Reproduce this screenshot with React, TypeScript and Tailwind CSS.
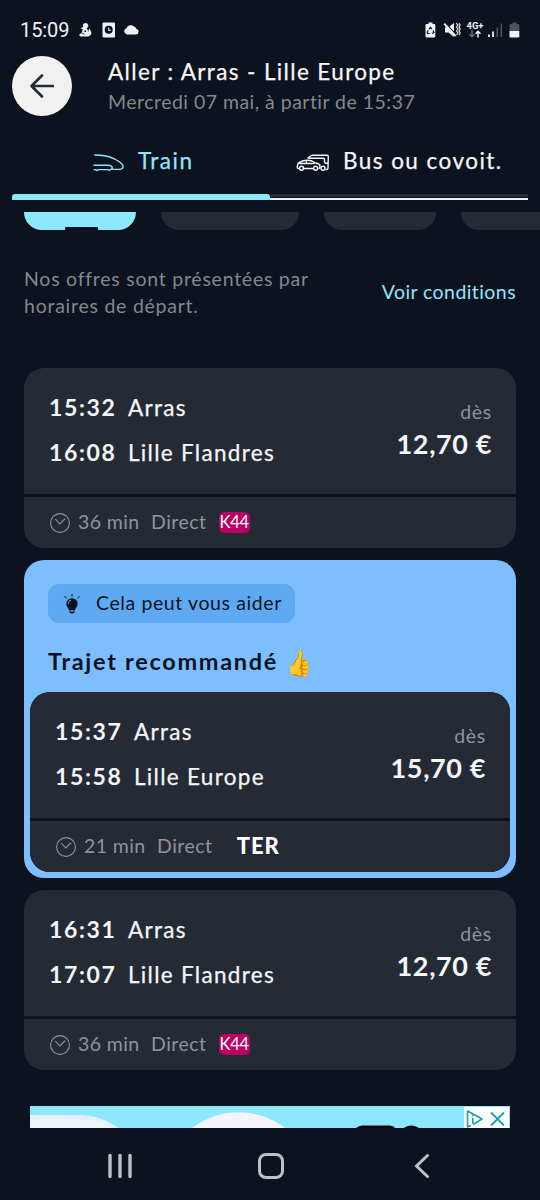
import type { ReactNode } from 'react';
import clsx from 'clsx';

interface Trip {
  departure: string;
  from: string;
  arrival: string;
  to: string;
  price: string;
  duration: string;
  line: ReactNode;
}

const LineBadge = ({ children }: { children: ReactNode }) => (
  <span className="ml-3 flex h-[21px] w-[31px] items-center justify-center rounded-[5px] bg-[#b90062] text-[16.5px] leading-none tracking-[-0.3px] text-white">
    {children}
  </span>
);

const TerLogo = () => (
  <span className="ml-6 pb-0.5 text-[22px] leading-none font-black tracking-[1px] text-white">TER</span>
);

const trips: Trip[] = [
  { departure: '15:32', from: 'Arras', arrival: '16:08', to: 'Lille Flandres', price: '12,70 €', duration: '36 min', line: <LineBadge>K44</LineBadge> },
  { departure: '15:37', from: 'Arras', arrival: '15:58', to: 'Lille Europe', price: '15,70 €', duration: '21 min', line: <TerLogo /> },
  { departure: '16:31', from: 'Arras', arrival: '17:07', to: 'Lille Flandres', price: '12,70 €', duration: '36 min', line: <LineBadge>K44</LineBadge> },
];

function ClockIcon() {
  return (
    <svg className="mt-px h-5 w-5 shrink-0" viewBox="0 0 20 20" fill="none" stroke="#8f949c" strokeWidth="1.1">
      <circle cx="10" cy="10" r="9.4" />
      <path d="M5.6 6.4 9.8 11l5-5" strokeLinecap="round" />
    </svg>
  );
}

function TripCard({ trip }: { trip: Trip }) {
  return (
    <div className="flex flex-col gap-[3px] overflow-hidden rounded-[20px] bg-[#0c121e]">
      <div className="flex h-[126px] justify-between bg-[#252b35] pr-6 pl-[25px]">
        {/* Times and stations */}
        <div className="flex flex-col pt-[17px] text-[#f5f6f8]">
          {[
            [trip.departure, trip.from],
            [trip.arrival, trip.to],
          ].map(([time, station]) => (
            <div key={time} className="flex h-[45px] leading-[45px]">
              <span className="w-[79px] text-[23px] font-bold tracking-[1.65px]">{time}</span>
              <span className="text-[22.5px] tracking-[1.3px] whitespace-nowrap [-webkit-text-stroke:0.25px]">{station}</span>
            </div>
          ))}
        </div>

        {/* Price */}
        <div className="flex flex-col items-end pt-8">
          <span className="text-[19.5px] leading-6 tracking-[0.7px] text-[#8f949c]">dès</span>
          <span className="text-[27px] leading-10 font-bold tracking-[0.6px] text-[#f5f6f8]">{trip.price}</span>
        </div>
      </div>

      {/* Duration, changes, line */}
      <div className="flex h-[51px] items-center bg-[#252b35] pl-[26px] text-[19.5px] leading-none text-[#8f949c]">
        <ClockIcon />
        <span className="ml-2 w-[73px] pb-0.5 tracking-[0.4px]">{trip.duration}</span>
        <span className="pb-0.5 tracking-[0.5px]">Direct</span>
        {trip.line}
      </div>
    </div>
  );
}

function StatusBar() {
  return (
    <div className="flex h-14 items-center justify-between pt-1 pr-5 pl-5">
      <div className="flex items-center">
        <span className="w-[58px] font-['Roboto'] text-[20px] leading-none tracking-[-0.1px] text-[#f0f1f3]">15:09</span>
        <svg className="h-4 w-[62px]" viewBox="0 0 62 16" fill="#f0f1f3">
          {/* Squirrel */}
          <circle cx="7.6" cy="3.6" r="2.7" />
          <path d="M5.5 4.5 2.6 6.4l2.2.7-1 3.5L1 13l1.5 1.4h8c2.5-.8 3.4-3 2.7-4.6-.6-1.2-1.4-1.8-1-3.2-1.7.6-2 2.4-1.6 3.6L9 6.5Z" />
          <circle cx="7.3" cy="9.2" r=".9" fill="#0c121e" />
          <path d="m3.5 10.8 3 1.4" stroke="#0c121e" strokeWidth=".8" />
          {/* Clock tile */}
          <rect x="24.5" y=".5" width="12.5" height="15" rx="1" />
          <circle cx="30.7" cy="7.8" r="4" fill="#0c121e" />
          <path d="M30.7 5.4v2.8h2.3" fill="none" stroke="#f0f1f3" strokeWidth="1.1" />
          <path d="M49 12.500a3.400 3.400 0 0 1-.4-6.600A4.500 4.500 0 0 1 56 4.600a3.500 3.500 0 0 1 2.300 2.200 2.900 2.900 0 0 1-.3 5.700Z" />
        </svg>
      </div>
      <div className="flex items-center">
        <svg className="h-4 w-9" viewBox="0 0 36 16" fill="#f0f1f3">
          <path d="M3.5.5h4V2H9a1.3 1.3 0 0 1 1.3 1.3v10.9A1.3 1.3 0 0 1 9 15.5H1.8a1.3 1.3 0 0 1-1.3-1.3V3.3A1.3 1.3 0 0 1 1.8 2h1.700Z" />
          <path d="m4 7.3 1.4-2.1 1.4 2M8 8.4l1 2-2 1.2M4.8 11.5H2.6l-.4-1.2 1-2" fill="none" stroke="#0c121e" strokeWidth="1.2" />
          <path d="M20 5.2h3.5L29 1v14l-5.5-4.4H20Z" />
          <path d="m20.500 1.200 11 12.100" stroke="#0c121e" strokeWidth="1.300" />
          <path d="m19.2 1.6 11.500 12.600" stroke="#f0f1f3" strokeWidth="1.900" />
          <path d="M31.200 1.200 33 3l-1.500 2L33 7l-1.500 2 1.500 2-1.500 2M34 1.200 35.200 3 34 5l1.200 2L34 9l1.200 2L34 13" fill="none" stroke="#f0f1f3" strokeWidth="1.100" />
        </svg>
        <div className="ml-[5px] flex w-[18px] flex-col items-center">
          <span className="font-['Roboto'] text-[9.5px] leading-[8px] font-bold text-[#f0f1f3]">4G+</span>
          <svg className="h-2 w-3.5" viewBox="0 0 14 8" fill="none" strokeWidth="1.5">
            <path d="M4 .5v6M1.5 4.3 4 6.8l2.5-2.5" stroke="#6b7079" />
            <path d="M10 7.5v-6M7.5 3.7 10 1.200l2.5 2.5" stroke="#f0f1f3" />
          </svg>
        </div>
        <svg className="ml-1 h-4 w-8" viewBox="0 0 32 16">
          <path d="M1 12.500v2.500M5 9.500v5.500" stroke="#f0f1f3" strokeWidth="1.8" />
          <path d="M9.200 5.500v9.500M13.300 1.500v13.500" stroke="#4d525b" strokeWidth="1.6" />
          <path d="M24.5.5h4V2H30a1.3 1.3 0 0 1 1.3 1.300V9H21.500V3.300A1.3 1.3 0 0 1 22.800 2h1.700Z" fill="#4d525b" />
          <path d="M21.500 9h9.800v5.200a1.3 1.3 0 0 1-1.300 1.300h-7.200a1.3 1.3 0 0 1-1.300-1.300Z" fill="#f0f1f3" />
        </svg>
      </div>
    </div>
  );
}

function Header() {
  return (
    <header className="flex h-[60px] pl-3">
      <button className="flex h-[60px] w-[60px] items-center justify-center rounded-full bg-[#f1f1f2]">
        <svg className="h-6 w-6" viewBox="0 0 24 24" fill="none" stroke="#242b35" strokeWidth="2.6" strokeLinecap="round" strokeLinejoin="round">
          <path d="M23 12H1.5M12 1.500 1.500 12 12 22.500" />
        </svg>
      </button>
      <div className="ml-9">
        <h1 className="text-[22.5px] leading-[31px] tracking-[1.37px] whitespace-nowrap text-[#f5f6f8] [-webkit-text-stroke:0.25px]">
          Aller : Arras - Lille Europe
        </h1>
        <p className="text-[19.5px] leading-[29px] tracking-[0.47px] whitespace-nowrap text-[#83888f]">
          Mercredi 07 mai, à partir de 15:37
        </p>
      </div>
    </header>
  );
}

function TrainIcon() {
  return (
    <svg className="mt-0.5 h-5 w-8" viewBox="0 0 32 20" fill="none" stroke="currentColor" strokeWidth="1.4" strokeLinecap="round">
      <path d="M1.800 2C12 1.800 20 4 27 9.200c2.200 1.700 3.400 3.400 3 5-.4 1.500-1.700 2.200-3.500 2.200H20" />
      <path d="M1 12.200h13.500c3 0 4.800 1.200 4.800 2.900 0 .9-.8 1.500-2 1.500l-1.300.6-1.500-.6h-9l-1.500.8-1.500-.8H1" />
    </svg>
  );
}

function BusIcon() {
  return (
    <svg className="mt-0.5 h-5 w-[34px]" viewBox="0 0 34 20" fill="none" stroke="currentColor" strokeWidth="1.400" strokeLinejoin="round">
      <path d="m11.500 5.500 3-2.500c.7-.5 1.300-.7 2.200-.7H31c.8 0 1.300.4 1.300 1.200L32 15c0 1-.5 1.500-1.500 1.500h-1M23.500 12.500v-1" />
      <path d="M12.500 5.200H27c1.500 0 1.500.8 1.500 1.500v2c0 1 .3 1.500 1.300 1.500H32" />
      <path d="M3 15.500c-1.700 0-2-.7-1.700-2l.8-3.300L6.500 8c2.500-.8 7-.8 9.500 0l3.500 2 3 .8c1.200.5 1.600 1.300 1.500 2.700 0 1.500-.4 2-1.500 2M8 15.500h9M3.500 10.500h15M10.500 7.500v3" />
      <circle cx="5.500" cy="15.300" r="2" />
      <circle cx="19.700" cy="15.300" r="2" />
      <circle cx="27" cy="15.300" r="2" />
    </svg>
  );
}

function Tabs() {
  return (
    <nav className="flex h-[84px] px-3">
      <div className="flex w-[258px] flex-col">
        <div className="flex h-[78px] items-center pt-[13px] pl-[81px] text-[22.5px] text-[#8de8fe]">
          <TrainIcon />
          <span className="ml-[13px] pb-px tracking-[1.5px] [-webkit-text-stroke:0.25px]">Train</span>
        </div>
        <div className="h-1.5 rounded-t-[3px] bg-[#8de8fe]" />
      </div>
      <div className="flex w-[258px] flex-col">
        <div className="flex h-[78px] items-center pt-[13px] pl-[26px] text-[22.5px] text-[#f5f6f8]">
          <BusIcon />
          <span className="ml-[13px] pb-px tracking-[1.45px] whitespace-nowrap [-webkit-text-stroke:0.25px]">Bus ou covoit.</span>
        </div>
        <div className="h-1.5 border-b-2 border-[#f1f2f4] pb-px">
          <div className="h-[3px] bg-[#252b35]" />
        </div>
      </div>
    </nav>
  );
}

const filters = ['w-[112px]', 'w-[138px]', 'w-[112px]', 'w-[120px]'];

function Filters() {
  return (
    <div className="mt-3 flex h-[18px] gap-[25px] overflow-hidden pl-6">
      {filters.map((width, i) => (
        <div
          key={i}
          className={clsx('flex shrink-0 items-end justify-center rounded-b-[18px]', width, i === 0 ? 'bg-[#8de8fe]' : 'bg-[#252b35]')}
        >
          {i === 0 && <div className="ml-0.5 h-[3px] w-[33px] rounded-t-[1px] bg-[#0c121e]" />}
        </div>
      ))}
    </div>
  );
}

function BulbIcon() {
  return (
    <svg className="h-5 w-4" viewBox="0 0 16 20" fill="#0c121e">
      <path d="M8 4.300a5.500 5.500 0 0 1 5.700 5.500c0 2.600-1.900 3.800-2.600 6.100H4.900C4.200 13.600 2.300 12.400 2.300 9.800A5.500 5.500 0 0 1 8 4.300ZM5.100 16.500h5.800l-.7 2.300c-.3.900-4 .9-4.400 0Z" />
      <path d="M8 .4v2M.7 2.600l1.500 1.300M15.300 2.600l-1.500 1.300" stroke="#0c121e" strokeWidth="1" strokeLinecap="round" />
      <path d="M4.300 9.500c0-1.800 1-2.800 2.400-3.300" fill="none" stroke="#7cbeff" strokeWidth=".9" strokeLinecap="round" />
      <path d="M6.500 17.300h3" stroke="#7cbeff" strokeWidth=".8" />
    </svg>
  );
}

function AdBanner() {
  return (
    <div className="mx-[30px] mt-9 flex h-[22px] bg-[#8de8fe]">
      <svg className="h-[22px] w-[434px]" viewBox="0 0 434 22">
        <path d="M0 9h50c15 0 26 5 39 13H0Z" fill="#e3effa" />
        <path d="M0 13c25-2 50 1 72 2l10 7H0Z" fill="#eff3fa" />
        <path d="M162 22c28-21 65-21 93 0Z" fill="#f3f3f9" />
        <path d="M326 22c3-2 5-2.500 8-2.500h23c4 0 7 .5 8 2.500ZM374 22c4-3.500 10-3.500 15 0Z" fill="#05080d" />
      </svg>
      <div className="mt-px mr-px flex flex-1 items-center bg-white">
        <svg className="h-5 w-[45px]" viewBox="0 0 45 20" fill="none" stroke="#1a9fb5" strokeWidth="1.600" strokeLinejoin="round">
          <path d="M7 17.500 3.500 19V3L18 11l-9 5.500" />
          <path d="M8.800 9.800v6M8.800 6.800v1.500" />
          <path d="m27.500 5 12 12M39.500 5l-12 12" strokeWidth="1.800" strokeLinecap="round" />
        </svg>
      </div>
    </div>
  );
}

function NavigationBar() {
  return (
    <div className="flex h-[72px] items-center pt-[3px] pl-[107px]">
      <svg className="h-[26px] w-[26px]" viewBox="0 0 26 26" stroke="#bdc0c6" strokeWidth="3.400" strokeLinecap="round">
        <path d="M3 2.500v21M13 2.500v21M23 2.500v21" />
      </svg>
      <div className="ml-[125px] h-[26px] w-[26px] rounded-[8px] border-[3px] border-[#bdc0c6]" />
      <svg className="ml-[129px] h-[26px] w-[18px]" viewBox="0 0 18 26" fill="none" stroke="#bdc0c6" strokeWidth="3" strokeLinecap="round">
        <path d="M14.500 2.500 3.500 13l11 10.500" />
      </svg>
    </div>
  );
}

export default function App() {
  return (
    <div className="h-[1200px] w-[540px] overflow-hidden bg-[#0c121e] font-['Lato',sans-serif]">
      <StatusBar />
      <Header />
      <Tabs />
      <Filters />

      <div className="mt-[35px] mb-[49px] flex h-[54px] items-center justify-between px-6 text-[19.5px]">
        <p className="w-[300px] leading-[27px] tracking-[0.75px] text-[#83888f]">
          Nos offres sont présentées par
          <br />
          horaires de départ.
        </p>
        <a className="tracking-[0.42px] whitespace-nowrap text-[#8de8fe]">Voir conditions</a>
      </div>

      <main className="flex flex-col gap-3 px-6">
        <TripCard trip={trips[0]} />

        {/* Recommended trip */}
        <section className="rounded-[20px] bg-[#7cbeff] px-1.5 pt-6 pb-1.5">
          <div className="ml-[18px] flex h-[39px] w-[247px] items-center rounded-[11px] bg-[#5eaaf2] pl-4 text-[#0c121e]">
            <BulbIcon />
            <span className="ml-4 pb-0.5 text-[19.5px] leading-none tracking-[0.6px] whitespace-nowrap">Cela peut vous aider</span>
          </div>
          <h2 className="mt-[23px] mb-[14px] ml-[18px] flex h-8 items-center text-[23.5px] font-bold tracking-[1.700px] text-[#0c121e]">
            Trajet recommandé
            <span className="ml-[5px] inline-block scale-x-75 text-[26px] tracking-normal">👍</span>
          </h2>
          <TripCard trip={trips[1]} />
        </section>

        <TripCard trip={trips[2]} />
      </main>

      <AdBanner />
      <NavigationBar />
    </div>
  );
}
